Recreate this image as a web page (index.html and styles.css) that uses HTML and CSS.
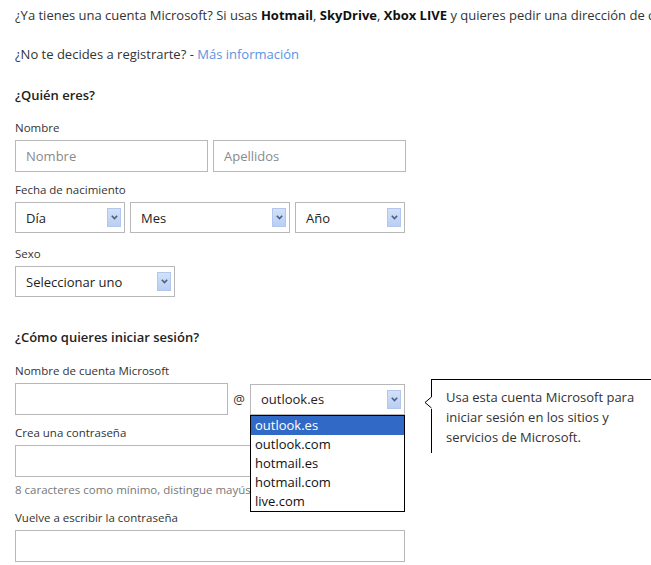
FILE: index.html
```html
<!DOCTYPE html>
<html lang="es">
<head>
<meta charset="utf-8">
<title>Crear cuenta Microsoft</title>
<link rel="stylesheet" href="styles.css">
</head>
<body>
<p class="intro">¿Ya tienes una cuenta Microsoft? Si usas <b>Hotmail</b>, <b>SkyDrive</b>, <b>Xbox LIVE</b> y quieres pedir una dirección de correo nueva, inicia sesión.</p>
<p class="undecided">¿No te decides a registrarte? - <a class="link" href="#">Más información</a></p>

<h2 class="section">¿Quién eres?</h2>

<div class="field first">
  <label class="lbl">Nombre</label>
  <div class="row">
    <div class="input w-half"><span class="ph">Nombre</span></div>
    <div class="input w-half"><span class="ph">Apellidos</span></div>
  </div>
</div>

<div class="field">
  <label class="lbl">Fecha de nacimiento</label>
  <div class="row">
    <div class="select w-day"><span>Día</span><span class="arrow"><svg width="7" height="5" viewBox="0 0 7 5"><polyline points="0.8,0.8 3.5,3.6 6.2,0.8" fill="none" stroke="#4b5e82" stroke-width="1.6"/></svg></span></div>
    <div class="select w-month"><span>Mes</span><span class="arrow"><svg width="7" height="5" viewBox="0 0 7 5"><polyline points="0.8,0.8 3.5,3.6 6.2,0.8" fill="none" stroke="#4b5e82" stroke-width="1.6"/></svg></span></div>
    <div class="select w-day"><span>Año</span><span class="arrow"><svg width="7" height="5" viewBox="0 0 7 5"><polyline points="0.8,0.8 3.5,3.6 6.2,0.8" fill="none" stroke="#4b5e82" stroke-width="1.6"/></svg></span></div>
  </div>
</div>

<div class="field sexo">
  <label class="lbl">Sexo</label>
  <div class="select w-sex"><span>Seleccionar uno</span><span class="arrow"><svg width="7" height="5" viewBox="0 0 7 5"><polyline points="0.8,0.8 3.5,3.6 6.2,0.8" fill="none" stroke="#4b5e82" stroke-width="1.6"/></svg></span></div>
</div>

<h2 class="section second">¿Cómo quieres iniciar sesión?</h2>

<div class="field first account">
  <label class="lbl">Nombre de cuenta Microsoft</label>
  <div class="row tight">
    <div class="input w-user"></div>
    <span class="at">@</span>
    <div class="domain">
      <div class="select w-domain"><span>outlook.es</span><span class="arrow"><svg width="7" height="5" viewBox="0 0 7 5"><polyline points="0.8,0.8 3.5,3.6 6.2,0.8" fill="none" stroke="#4b5e82" stroke-width="1.6"/></svg></span></div>
      <ul class="options">
        <li class="sel">outlook.es</li>
        <li>outlook.com</li>
        <li>hotmail.es</li>
        <li>hotmail.com</li>
        <li>live.com</li>
      </ul>
    </div>
  </div>
  <div class="tip">
    <svg class="notch" width="8" height="12" viewBox="0 0 8 12"><rect x="6" y="0" width="2" height="12" fill="#fff"/><polyline points="7.5,0 1,5.5 7.5,11" fill="#fff" stroke="#000" stroke-width="1"/></svg>
    <p>Usa esta cuenta Microsoft para<br>iniciar sesión en los sitios y<br>servicios de Microsoft.</p>
  </div>
</div>

<div class="field">
  <label class="lbl">Crea una contraseña</label>
  <div class="input w-full"></div>
  <p class="hint">8 caracteres como mínimo, distingue mayúsculas y minúsculas</p>
</div>

<div class="field last">
  <label class="lbl">Vuelve a escribir la contraseña</label>
  <div class="input w-full"></div>
</div>
</body>
</html>
```

FILE: styles.css
```css
html, body {
  background: #fff;
}
body {
  margin: 0;
  padding: 5px 0 0 15px;
  font-family: "Open Sans", "Noto Sans", "DejaVu Sans", sans-serif;
  font-size: 13px;
  color: #333;
  overflow: hidden;
  height: 560px;
}
.intro {
  margin: 0;
  line-height: 20px;
  white-space: nowrap;
}
.intro b {
  font-weight: 700;
  color: #111;
}
.undecided {
  margin: 19px 0 0;
  line-height: 20px;
}
.link {
  color: #5a94e2;
  text-decoration: none;
}
.section {
  margin: 21px 0 0;
  font-size: 13px;
  line-height: 20px;
  font-weight: 600;
  color: #222;
}
.section.second {
  margin-top: 30px;
}
.field {
  margin-top: 10px;
  width: 390px;
}
.field.first {
  margin-top: 15px;
}
.field.account {
  margin-top: 16px;
}
.field.sexo {
  margin-top: 13px;
}
.field.last {
  margin-top: 12px;
}
.account {
  position: relative;
}
.lbl {
  display: block;
  font-size: 11.5px;
  line-height: 16px;
  margin-bottom: 4px;
  color: #333;
}
.row {
  display: flex;
  align-items: center;
  gap: 5px;
}
.row.tight {
  gap: 0;
}
.input {
  box-sizing: border-box;
  flex-shrink: 0;
  height: 32px;
  border: 1px solid #b8b8b8;
  background: #fff;
  padding: 0 10px;
  display: flex;
  align-items: center;
}
.ph {
  color: #8a8a8a;
}
.w-half { width: 193px; }
.w-full { width: 390px; }
.w-user { width: 213px; }
.select {
  box-sizing: border-box;
  flex-shrink: 0;
  height: 31px;
  border: 1px solid #b8b8b8;
  background: #fff;
  padding: 0 3px 0 10px;
  display: flex;
  align-items: center;
  justify-content: space-between;
  color: #222;
}
.w-day { width: 110px; }
.w-month { width: 160px; }
.w-sex { width: 160px; }
.w-domain { width: 155px; }
.arrow {
  box-sizing: border-box;
  width: 14px;
  height: 19px;
  background: linear-gradient(#d3e1f8, #b9cef4);
  border: 1px solid #b3c7ee;
  display: flex;
  align-items: center;
  justify-content: center;
}
.arrow svg {
  display: block;
}
.at {
  flex-shrink: 0;
  width: 12px;
  margin: 0 5px 0 5px;
  text-align: center;
  color: #333;
}
.domain {
  position: relative;
  flex-shrink: 0;
}
.options {
  position: absolute;
  left: 0;
  top: 100%;
  z-index: 5;
  box-sizing: border-box;
  width: 155px;
  margin: 0;
  padding: 0;
  list-style: none;
  border: 1px solid #000;
  background: #fff;
}
.options li {
  height: 19px;
  line-height: 19px;
  padding-left: 4px;
  color: #111;
}
.options li.sel {
  background: #3169c6;
  color: #fff;
}
.tip {
  position: absolute;
  left: 416px;
  top: 16px;
  width: 300px;
  height: 73px;
  border-top: 1px solid #000;
  border-left: 1px solid #000;
  background: #fff;
}
.tip .notch {
  position: absolute;
  left: -8px;
  top: 17px;
}
.tip p {
  margin: 0;
  padding: 7px 0 0 14px;
  line-height: 20px;
  color: #333;
  white-space: nowrap;
}
.hint {
  margin: 5px 0 0;
  font-size: 11.5px;
  line-height: 16px;
  color: #777;
  white-space: nowrap;
}
```
